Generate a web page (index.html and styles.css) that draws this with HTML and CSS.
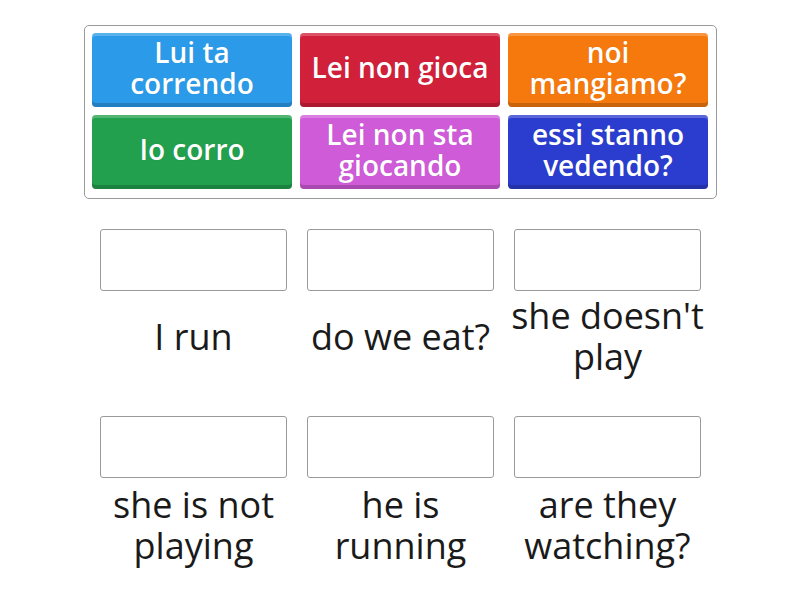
FILE: index.html
```html
<!DOCTYPE html>
<html>
<head>
<meta charset="utf-8">
<link rel="stylesheet" href="styles.css">
</head>
<body>
<div class="bank">
  <div class="tile blue"><span>Lui ta correndo</span></div>
  <div class="tile red"><span>Lei non gioca</span></div>
  <div class="tile orange"><span>noi mangiamo?</span></div>
  <div class="tile green"><span>Io corro</span></div>
  <div class="tile pink"><span>Lei non sta giocando</span></div>
  <div class="tile navy"><span>essi stanno vedendo?</span></div>
</div>
<div class="targets">
  <div class="cell top"><div class="box"></div><div class="label">I run</div></div>
  <div class="cell top"><div class="box"></div><div class="label">do we eat?</div></div>
  <div class="cell top"><div class="box"></div><div class="label">she doesn't play</div></div>
  <div class="cell"><div class="box"></div><div class="label">she is not playing</div></div>
  <div class="cell"><div class="box"></div><div class="label">he is running</div></div>
  <div class="cell"><div class="box"></div><div class="label">are they watching?</div></div>
</div>
</body>
</html>
```
FILE: styles.css
```css
html, body {
  margin: 0;
  padding: 0;
  background: #ffffff;
  font-family: "Open Sans", "Liberation Sans", sans-serif;
}
body {
  width: 800px;
  height: 600px;
  overflow: hidden;
}
.bank {
  margin: 25px 0 0 84px;
  border: 1px solid #9a9a9a;
  border-radius: 5px;
  padding: 7px 7px 8px 7px;
  box-sizing: border-box;
  width: 633px;
  height: 174px;
  display: grid;
  grid-template-columns: repeat(3, 200px);
  grid-template-rows: repeat(2, 74px);
  gap: 8px;
}
.tile {
  border-radius: 4px;
  display: flex;
  align-items: center;
  justify-content: center;
  text-align: center;
  color: #ffffff;
  font-weight: 600;
  font-size: 28px;
  line-height: 31px;
  padding: 0 6px 5px 6px;
  box-sizing: border-box;
  box-shadow: inset 0 3px 0 rgba(255,255,255,0.22), inset 0 -4px 0 rgba(0,0,0,0.18);
  text-shadow: 0 0 1px rgba(0,0,0,0.15);
}
.blue { background: #2b9be9; }
.red { background: #d1203a; }
.orange { background: #f6790e; }
.green { background: #22a04e; }
.pink { background: #cf5bd9; }
.navy { background: #2b3dcf; }

.targets {
  margin: 30px 0 0 90px;
  display: grid;
  grid-template-columns: repeat(3, 207px);
  row-gap: 31px;
}
.cell {
  display: flex;
  flex-direction: column;
  align-items: center;
}
.box {
  width: 187px;
  height: 62px;
  border: 1px solid #9a9a9a;
  border-radius: 3px;
  box-sizing: border-box;
}
.label {
  height: 94px;
  width: 207px;
  box-sizing: border-box;
  display: flex;
  align-items: center;
  justify-content: center;
  text-align: center;
  font-size: 36px;
  line-height: 41px;
  color: #1a1a1a;
}
.top .label {
  padding-bottom: 4px;
}
```
